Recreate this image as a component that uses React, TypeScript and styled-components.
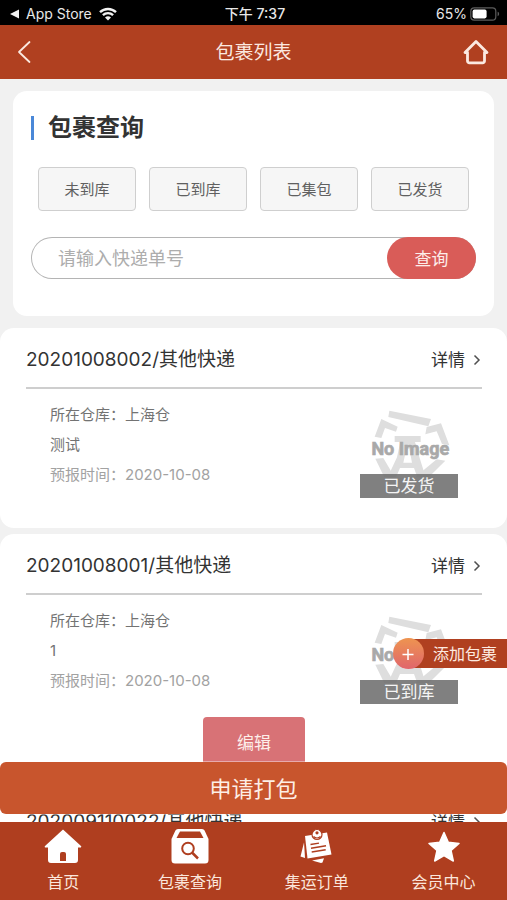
import React from "react";
import styled, { createGlobalStyle } from "styled-components";

const GlobalStyle = createGlobalStyle`
  * { box-sizing: border-box; }
  body {
    margin: 0;
    background: #f1f1f1;
    color: #333;
    font-family: Inter, "Noto Sans CJK SC", sans-serif;
  }
  button, input { font-family: inherit; }
  h1, h2, h3, p { margin: 0; font-weight: 400; }
  a { color: inherit; text-decoration: none; }
`;

const Screen = styled.div`
  display: flex;
  flex-direction: column;
  height: 100vh;
  overflow: hidden;
`;

const StatusBar = styled.div`
  display: grid;
  grid-template-columns: 1fr auto 1fr;
  align-items: center;
  flex: none;
  height: 25px;
  padding: 2px 7px 0 10px;
  background: #000;
  color: #e8e8e8;
  font-size: 14px;
  line-height: 20px;
`;

const StatusGroup = styled.div<{ $end?: boolean }>`
  display: flex;
  align-items: center;
  justify-content: ${(p) => (p.$end ? "flex-end" : "flex-start")};
  gap: ${(p) => (p.$end ? "3px" : "7px")};
`;

const Clock = styled.span`
  font-weight: 500;
`;

const TitleBar = styled.header`
  display: grid;
  grid-template-columns: 1fr auto 1fr;
  align-items: center;
  flex: none;
  height: 54px;
  padding: 0 17px;
  background: #b04020;
  color: #fbe9e0;
`;

const PageTitle = styled.h1`
  padding-top: 2px;
  font-size: 19px;
  line-height: 28px;
`;

const IconButton = styled.button<{ $end?: boolean }>`
  display: flex;
  justify-self: ${(p) => (p.$end ? "end" : "start")};
  padding: 0;
  border: 0;
  background: none;
  color: inherit;
`;

const Body = styled.div`
  position: relative;
  flex: 1;
  min-height: 0;
`;

const Scroller = styled.main`
  height: 100%;
  overflow-y: auto;
  scrollbar-width: none;
  padding-top: 12px;
`;

const SearchCard = styled.section`
  margin: 0 13px 12px;
  padding: 22px 18px 37px;
  border-radius: 14px;
  background: #fff;
`;

const SearchHeading = styled.h2`
  display: flex;
  align-items: center;
  gap: 14px;
  font-size: 24px;
  line-height: 30px;
  font-weight: 700;

  &::before {
    content: "";
    width: 3px;
    height: 24px;
    background: #4a88d8;
  }
`;

const Filters = styled.div`
  display: grid;
  grid-template-columns: repeat(4, 1fr);
  gap: 13px;
  margin: 24px 7px 26px;
`;

const FilterButton = styled.button`
  height: 44px;
  padding: 0 0 2px;
  border: 1px solid #cfcfcf;
  border-radius: 4px;
  background: #f6f6f6;
  color: #606060;
  font-size: 15px;
`;

const SearchForm = styled.form`
  display: flex;
  height: 42px;
  border-radius: 21px;
  box-shadow: inset 0 0 0 1px #b4b4b4;
`;

const SearchInput = styled.input`
  flex: 1;
  min-width: 0;
  padding: 0 0 0 27px;
  border: 0;
  background: none;
  color: #444;
  font-size: 18px;
  outline: none;

  &::placeholder { color: #adadad; opacity: 1; }
`;

const SearchButton = styled.button`
  width: 89px;
  padding: 0 0 2px;
  border: 0;
  border-radius: 21px;
  background: #d95c58;
  color: #fdeeea;
  font-size: 17px;
`;

const PackageCard = styled.article`
  margin-bottom: 6px;
  padding: 0 25px 0 26px;
  border-radius: 14px;
  background: #fff;
  overflow: hidden;
`;

const PackageHeader = styled.div`
  display: flex;
  align-items: center;
  justify-content: space-between;
  height: 61px;
  padding-top: 5px;
  border-bottom: 2px solid #cecece;
`;

const PackageTitle = styled.h3`
  font-size: 19px;
  line-height: 28px;
`;

const DetailLink = styled.a`
  display: flex;
  align-items: center;
  gap: 7px;
  font-size: 17px;
  line-height: 24px;
`;

const PackageBody = styled.div<{ $hasAction: boolean }>`
  display: flex;
  justify-content: space-between;
  padding: 11px 24px ${(p) => (p.$hasAction ? "13px" : "30px")};
`;

const Info = styled.p<{ $muted?: boolean }>`
  font-size: 15px;
  line-height: 30px;
  color: ${(p) => (p.$muted ? "#a2a2a2" : "#737373")};
`;

const Thumb = styled.figure`
  position: relative;
  width: 98px;
  height: 91px;
  margin: 7px 0 0;
`;

const StatusTag = styled.figcaption`
  position: absolute;
  inset: auto 0 0;
  background: rgba(110, 110, 110, 0.88);
  color: #f4f4f4;
  font-size: 17px;
  line-height: 24px;
  text-align: center;
`;

const EditButton = styled.button`
  display: block;
  width: 102px;
  height: 50px;
  margin: 0 auto 17px;
  padding: 0 0 2px;
  border: 0;
  border-radius: 4px;
  background: #d87276;
  color: #fdeeea;
  font-size: 17px;
`;

const AddButton = styled.button`
  position: absolute;
  right: 0;
  bottom: 153px;
  display: flex;
  align-items: center;
  gap: 9px;
  height: 32px;
  padding: 0 10px 0 0;
  border: 0;
  background: linear-gradient(#b04020, #b04020) right center / calc(100% - 16px) 29px no-repeat;
  color: #fdeae0;
  font-size: 16px;
`;

const PlusDisc = styled.span`
  display: flex;
  align-items: center;
  justify-content: center;
  width: 31px;
  height: 31px;
  border-radius: 50%;
  background: linear-gradient(#ee9450, #e0666c);
`;

const SubmitButton = styled.button`
  position: absolute;
  inset: auto 0 8px;
  height: 52px;
  padding: 0 0 3px;
  border: 0;
  border-radius: 6px;
  background: #c8552d;
  color: #fdeee6;
  font-size: 22px;
  box-shadow: 0 0 0 1px #fff6;
`;

const TabBar = styled.nav`
  display: grid;
  grid-template-columns: repeat(4, 1fr);
  flex: none;
  height: 78px;
  background: #af3e1f;
`;

const Tab = styled.a`
  display: flex;
  flex-direction: column;
  align-items: center;
  gap: 4px;
  padding-top: 6px;
  color: #fbe6dc;
  font-size: 16px;
  line-height: 24px;
`;

const WifiIcon = () => (
  <svg width="18" height="14" viewBox="0 0 18 14" fill="none" stroke="#f2f2f2" strokeWidth="2.4" aria-hidden="true">
    <path d="M1 5.2A11.6 11.6 0 0 1 17 5.2" />
    <path d="M3.9 8.2a7.4 7.4 0 0 1 10.2 0" />
    <path d="M9 13.6 6 10.6a4.3 4.3 0 0 1 6 0z" fill="#f2f2f2" stroke="none" />
  </svg>
);

const BackArrow = () => (
  <svg width="9" height="10" viewBox="0 0 9 10" fill="#f2f2f2" aria-hidden="true">
    <path d="M9 .5v9L0 5z" />
  </svg>
);

const BatteryIcon = () => (
  <svg width="30" height="14" viewBox="0 0 30 14" aria-hidden="true">
    <rect x=".8" y=".8" width="25" height="12.4" rx="3.4" fill="none" stroke="#5c5c5c" strokeWidth="1.2" />
    <rect x="2.6" y="2.6" width="14" height="8.8" rx="1.8" fill="#fff" />
    <path d="M27.6 4.8c2 .6 2 3.8 0 4.4z" fill="#5c5c5c" />
  </svg>
);

const ChevronLeft = () => (
  <svg width="14" height="24" viewBox="0 0 14 24" fill="none" stroke="currentColor" strokeWidth="1.8" strokeLinecap="round" strokeLinejoin="round" aria-hidden="true">
    <path d="M12.5 2 2 12l10.5 10" />
  </svg>
);

const HomeOutline = () => (
  <svg width="28" height="26" viewBox="0 0 28 26" fill="none" stroke="currentColor" strokeWidth="2.8" strokeLinecap="round" strokeLinejoin="round" aria-hidden="true">
    <path d="M5.500 13.500H3L14 2.500l11 11h-2.500V22a1.800 1.800 0 0 1-1.800 1.800H7.300A1.800 1.800 0 0 1 5.500 22z" />
  </svg>
);

const ChevronRight = () => (
  <svg width="10" height="12" viewBox="0 0 10 12" fill="none" stroke="#505050" strokeWidth="1.5" aria-hidden="true">
    <path d="m2.500 1.500 4.500 4.500-4.500 4.500" />
  </svg>
);

const PlusIcon = () => (
  <svg width="12" height="14" viewBox="0 0 12 14" stroke="#fff" strokeWidth="1.5" aria-hidden="true">
    <path d="M6 3v11M.5 8.500h11" />
  </svg>
);

const Placeholder = () => (
  <svg width="98" height="91" viewBox="60 261 294 273" role="img" aria-label="No Image">
    <g fill="#dedede">
      <path d="m148 272 125 25-8 22-120-28z" />
      <path d="m124 297 49 23-5 15-33-11-11 30-20-4z" />
      <path d="m256 343 4-22 43-11 25 66-22-4-16-38z" />
      <path d="M164 348h78v18h-17l14 48 18 58h-25l-10-28h-42l-12 28h-25l28-60 10-46h-17zM190 428h26l-8-42h-9z" />
      <path d="m106 416 24-2 33 56-30 2z" />
      <path d="m290 418 26 4-50 50h-40l18-16z" />
    </g>
    <text x="211" y="405" textAnchor="middle" fill="#a9a9a9" stroke="#a9a9a9" strokeWidth="2" fontFamily="Roboto, sans-serif" fontWeight="700" fontSize="54">
      No Image
    </text>
  </svg>
);

const HouseIcon = () => (
  <svg width="38" height="38" viewBox="0 0 38 38" fill="#fff" aria-hidden="true">
    <path d="M19 1.500 37 18c.6.800.2 1.500-.6 1.500H34v12.500a3 3 0 0 1-3 3H7a3 3 0 0 1-3-3V19.500H1.600c-.8 0-1.200-.7-.6-1.500z" />
    <path d="M16 33v-7a2 2 0 0 1 2-2h2a2 2 0 0 1 2 2v7z" fill="#af3e1f" />
  </svg>
);

const BoxSearchIcon = () => (
  <svg width="38" height="38" viewBox="0 0 38 38" fill="#fff" aria-hidden="true">
    <path d="M7 1h24a3 3 0 0 1 2.700 1.700L37.500 11v21a3.500 3.500 0 0 1-3.500 3.500H4A3.500 3.500 0 0 1 .5 32V11L4.300 2.700A3 3 0 0 1 7 1z" />
    <path d="M9 3.500h20l3.500 6.500h-27z" fill="#af3e1f" />
    <g fill="none" stroke="#af3e1f" strokeWidth="2">
      <circle cx="17" cy="20.500" r="5.800" />
      <path d="m21 24.500 6 6" strokeWidth="2.500" />
    </g>
  </svg>
);

const NoteIcon = () => (
  <svg width="38" height="38" viewBox="0 0 38 38" fill="#fff" aria-hidden="true">
    <path d="M6 14.500 2.500 28.500l4.500 1.500z" />
    <path d="m14 32.500 12-2.200-1.500 4.200-1.500.5z" />
    <path d="M7 8 29 4.500l4.500 22L9.500 30.500z" />
    <g fill="none" stroke="#af3e1f" strokeWidth="1.400">
      <path d="m12.500 16.500 8.500-1.400M13 20.200l15-2.400M13.700 24l14-2.300" />
    </g>
    <circle cx="19" cy="6.500" r="5" stroke="#af3e1f" strokeWidth="1.200" />
    <path d="M15.500 8.500q3.500 3 7 0" fill="none" stroke="#af3e1f" strokeWidth="1.200" />
    <circle cx="19" cy="4.800" r="1.600" fill="#af3e1f" />
  </svg>
);

const StarIcon = () => (
  <svg width="38" height="38" viewBox="0 0 38 38" fill="#fff" stroke="#fff" strokeWidth="1.500" strokeLinejoin="round" aria-hidden="true">
    <path d="m19 4.500 4.300 9.700 10.700 1.200-8 7.100 2.300 10.500L19 27.700 9.700 33 12 22.500l-8-7.100 10.700-1.200z" />
  </svg>
);

type Package = { code: string; note: string; status: string; editable: boolean };

const packages: Package[] = [
  { code: "20201008002", note: "测试", status: "已发货", editable: false },
  { code: "20201008001", note: "1", status: "已到库", editable: true },
  { code: "202009110022", note: "1", status: "已到库", editable: true },
];

const filters = ["未到库", "已到库", "已集包", "已发货"];

const tabs = [
  { label: "首页", icon: <HouseIcon /> },
  { label: "包裹查询", icon: <BoxSearchIcon /> },
  { label: "集运订单", icon: <NoteIcon /> },
  { label: "会员中心", icon: <StarIcon /> },
];

const PackageItem = ({ code, note, status, editable }: Package) => (
  <PackageCard>
    <PackageHeader>
      <PackageTitle>{code}/其他快递</PackageTitle>
      <DetailLink href="#detail">
        详情
        <ChevronRight />
      </DetailLink>
    </PackageHeader>
    <PackageBody $hasAction={editable}>
      <div>
        <Info>所在仓库：上海仓</Info>
        <Info>{note}</Info>
        <Info $muted>预报时间：2020-10-08</Info>
      </div>
      <Thumb>
        <Placeholder />
        <StatusTag>{status}</StatusTag>
      </Thumb>
    </PackageBody>
    {editable && <EditButton type="button">编辑</EditButton>}
  </PackageCard>
);

export default function App() {
  return (
    <Screen>
      <GlobalStyle />
      <StatusBar>
        <StatusGroup>
          <BackArrow />
          <span>App Store</span>
          <WifiIcon />
        </StatusGroup>
        <Clock>下午 7:37</Clock>
        <StatusGroup $end>
          <span>65%</span>
          <BatteryIcon />
        </StatusGroup>
      </StatusBar>
      <TitleBar>
        <IconButton type="button" aria-label="返回">
          <ChevronLeft />
        </IconButton>
        <PageTitle>包裹列表</PageTitle>
        <IconButton type="button" aria-label="首页" $end>
          <HomeOutline />
        </IconButton>
      </TitleBar>
      <Body>
        <Scroller>
          <SearchCard>
            <SearchHeading>包裹查询</SearchHeading>
            <Filters>
              {filters.map((name) => (
                <FilterButton key={name} type="button">
                  {name}
                </FilterButton>
              ))}
            </Filters>
            <SearchForm onSubmit={(event) => event.preventDefault()}>
              <SearchInput type="text" aria-label="快递单号" placeholder="请输入快递单号" />
              <SearchButton type="submit">查询</SearchButton>
            </SearchForm>
          </SearchCard>
          {packages.map((item) => (
            <PackageItem key={item.code} {...item} />
          ))}
        </Scroller>
        <AddButton type="button">
          <PlusDisc>
            <PlusIcon />
          </PlusDisc>
          添加包裹
        </AddButton>
        <SubmitButton type="button">申请打包</SubmitButton>
      </Body>
      <TabBar>
        {tabs.map((tab) => (
          <Tab key={tab.label} href="#tab">
            {tab.icon}
            {tab.label}
          </Tab>
        ))}
      </TabBar>
    </Screen>
  );
}
